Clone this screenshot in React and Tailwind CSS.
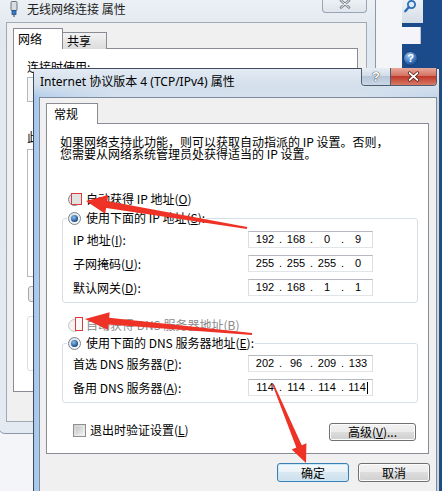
import React from 'react';

const cjk = "font-['Noto_Sans_CJK_SC',sans-serif]";

// tapered annotation arrow, tail -> tip
function arrow(tx, ty, px, py, head, hw, w0, w1) {
  const dx = px - tx;
  const dy = py - ty;
  const len = Math.hypot(dx, dy);
  const ux = dx / len;
  const uy = dy / len;
  const nx = -uy;
  const ny = ux;
  const bx = px - ux * head;
  const by = py - uy * head;
  const pts = [
    [tx + (nx * w0) / 2, ty + (ny * w0) / 2],
    [bx + (nx * w1) / 2, by + (ny * w1) / 2],
    [bx + (nx * hw) / 2, by + (ny * hw) / 2],
    [px, py],
    [bx - (nx * hw) / 2, by - (ny * hw) / 2],
    [bx - (nx * w1) / 2, by - (ny * w1) / 2],
    [tx - (nx * w0) / 2, ty - (ny * w0) / 2],
  ];
  return pts.map((p) => p.map((v) => v.toFixed(1)).join(',')).join(' ');
}

function K({ c }) {
  return (
    <>
      (<span className="underline underline-offset-1">{c}</span>)
    </>
  );
}

function Radio({ checked = false, disabled = false }) {
  return (
    <span
      className={`flex h-[13px] w-[13px] shrink-0 items-center justify-center rounded-full border ${
        disabled
          ? 'border-[#c9c9c9] bg-[#f3f3f3]'
          : 'border-[#7b838c] bg-[linear-gradient(135deg,#d9dde2,#ffffff)]'
      }`}
    >
      {checked && (
        <span className="h-[7px] w-[7px] rounded-full bg-[radial-gradient(circle_at_40%_35%,#8cc2ee,#1b4a88_70%)]" />
      )}
    </span>
  );
}

function Checkbox() {
  return (
    <span className="block h-[13px] w-[13px] shrink-0 border border-[#8e8f8f] bg-[linear-gradient(135deg,#d0d0d0,#f6f6f6)] p-[2px]">
      <span className="block h-full w-full bg-[linear-gradient(135deg,#c6c6c6,#ededed)]" />
    </span>
  );
}

function IpBox({ parts, cursor = false }) {
  return (
    <div className="flex h-[17px] w-[125px] items-center border border-[#b5b8bf] border-b-[#e0e5ea] border-l-[#dadde3] border-r-[#dadde3] bg-white pl-[2px] font-['Liberation_Sans',sans-serif] text-[11px] leading-none">
      <span className="w-[28px] text-center">{parts[0]}</span>
      <span className="flex w-[3px] justify-center">.</span>
      <span className="w-[28px] text-center">{parts[1]}</span>
      <span className="flex w-[3px] justify-center">.</span>
      <span className="w-[28px] text-center">{parts[2]}</span>
      <span className="flex w-[3px] justify-center">.</span>
      <span className="flex w-[28px] items-center justify-center">
        {parts[3]}
        {cursor && <span className="ml-px h-[12px] w-px bg-black" />}
      </span>
    </div>
  );
}

function Row({ label, parts, cursor }) {
  return (
    <div className="grid grid-cols-[175px_125px] items-center">
      <span className="text-[12px] leading-[14px]">{label}</span>
      <IpBox parts={parts} cursor={cursor} />
    </div>
  );
}

function Btn({ children, primary = false, className = '' }) {
  return (
    <div
      className={`flex items-center justify-center rounded-[3px] border text-[12px] leading-none ${
        primary
          ? 'border-[#3c7fb1] bg-[linear-gradient(#f4f9fc,#e9f2f8_50%,#d9e8f2_50%,#cde0ee)] shadow-[inset_0_0_0_1px_#c9e8f8]'
          : 'border-[#707070] bg-[linear-gradient(#f2f2f2,#ebebeb_50%,#dddddd_50%,#cfcfcf)] shadow-[inset_0_0_0_1px_#fcfcfc]'
      } ${className}`}
    >
      {children}
    </div>
  );
}

function RightStrip() {
  return (
    <div className="absolute left-[402px] top-0 flex h-full w-[40px] bg-[#1c4b8b]">
      <div className="flex w-[21px] flex-col">
        <div className="h-[23px] bg-[linear-gradient(#eef2f6,#d4dce6)] pl-px">
          <svg width="14" height="14" viewBox="0 0 14 14">
            <circle cx="8.5" cy="4.5" r="3.6" fill="#dbe9f7" stroke="#2c6cb6" strokeWidth="1.8" />
            <path d="M5.8 7.3 L2.2 11.2" stroke="#2c6cb6" strokeWidth="2.4" strokeLinecap="round" />
          </svg>
        </div>
        <div className="mt-[4px] h-[17px] w-[19px] border-r border-[#b9bfd6] bg-[#f4f4fa]" />
        <div className="mt-[7px] pl-px">
          <span className="flex h-[15px] w-[15px] items-center justify-center rounded-full border border-[#1b3f73] bg-[radial-gradient(circle_at_40%_30%,#9cc8f2,#2a62ad_65%,#173f7a)] font-['Liberation_Sans',sans-serif] text-[11px] font-bold leading-none text-white">
            ?
          </span>
        </div>
      </div>
    </div>
  );
}

function BackWindow() {
  return (
    <div className="absolute left-[-2px] top-[-6px] flex h-[440px] w-[378px] flex-col rounded-[7px] border border-[#8c98a7] bg-[linear-gradient(#eef2f6,#e1e8ef_8%,#e4eaf1)]">
      <div className="flex h-[27px] items-start">
        <svg className="ml-[11px] mt-[6px]" width="8" height="16" viewBox="0 0 8 16">
          <rect x="1" y="0.5" width="6" height="9" rx="1" fill="#d8dde2" stroke="#6d7680" />
          <rect x="2" y="9.5" width="4" height="4" fill="#3a79c4" stroke="#254f85" strokeWidth="0.8" />
          <path d="M4 13.5 V16" stroke="#555" strokeWidth="1.2" />
        </svg>
        <span className="ml-[9px] mt-[6px] text-[12px] leading-[16px] text-[#1e1e1e]">无线网络连接 属性</span>
        <div className="ml-auto mr-[8px] flex h-[18px] w-[45px] items-center justify-center rounded-b-[4px] border border-t-0 border-[#9aa5b3] bg-[linear-gradient(#f3f5f8,#dfe5ec)]">
          <svg width="12" height="10" viewBox="0 0 12 10">
            <path d="M2 1.5 L10 8.5 M10 1.5 L2 8.5" stroke="#7d8590" strokeWidth="2.6" strokeLinecap="round" />
            <path d="M2 1.5 L10 8.5 M10 1.5 L2 8.5" stroke="#f4f4f4" strokeWidth="1" strokeLinecap="round" />
          </svg>
        </div>
      </div>
      <div className="ml-[7px] flex h-[400px] w-[361px] flex-col border border-[#a0a9b4] bg-[#f0f0f0] pl-[6px] pt-[5px]">
        <div className="relative z-10 flex items-end">
          <div className="h-[21px] w-[50px] border border-b-0 border-[#898c95] bg-white pl-[4px] pt-[2px] text-[12px] leading-[16px]">
            网络
          </div>
          <div className="h-[17px] w-[44px] border border-b-0 border-l-0 border-[#898c95] bg-[linear-gradient(#f2f2f2,#dcdcdc)] pl-[4px] text-[12px] leading-[16px]">
            共享
          </div>
        </div>
        <div className="-mt-px flex h-[344px] w-[345px] flex-col border border-[#898c95] bg-white pl-[13px] pt-[11px] text-[12px] leading-[14px]">
          <span>连接时使用:</span>
          <div className="mt-[3px] h-[25px] w-[318px] border border-[#b5b8bf] bg-[#f7f7f7]" />
          <span className="mt-[28px]">此连接使用下列项目(O):</span>
          <div className="mt-[5px] h-[128px] w-[318px] border border-[#b5b8bf] bg-white" />
          <div className="ml-px mt-[9px] h-[16px] w-[75px] rounded-[3px] border border-[#a8a8a8] bg-[#ececec]" />
          <div className="mt-[14px] h-[55px] w-[318px] rounded-[3px] border border-[#d5dfe5]" />
        </div>
      </div>
    </div>
  );
}

function Dialog() {
  return (
    <div className="absolute left-[33px] top-[68px] flex h-[430px] w-[407px] flex-col rounded-t-[6px] border border-[#3e4b5c] bg-[linear-gradient(90deg,#a4c6ec,#b7d0ec_2%,#d4e1ee_20%,#d6e2ee_80%,#c4d6ea)]">
      <div className="flex h-[28px] items-start bg-[linear-gradient(#e3ebf4,#d3dfeb_60%,transparent)]">
        <span className="ml-[6px] mt-[5px] font-['Noto_Sans','Noto_Sans_CJK_SC',sans-serif] text-[12px] leading-[16px]">
          Internet 协议版本 4 (TCP/IPv4) 属性
        </span>
        <div className="ml-auto mr-[2px] flex h-[18px] -translate-y-px overflow-hidden rounded-b-[4px] border border-t-0 border-[#4f5d6f]">
          <div className="flex w-[29px] items-center justify-center border-r border-[#4f5d6f] bg-[linear-gradient(#e8eef5,#cfdbe8_50%,#b6c7da_50%,#c9d7e6)]">
            <span className="font-['Liberation_Sans',sans-serif] text-[13px] font-bold leading-none text-white [text-shadow:0_0_1px_#333,0_0_1px_#333]">
              ?
            </span>
          </div>
          <div className="flex w-[45px] items-center justify-center bg-[linear-gradient(#e9a99b,#d47463_45%,#c0392b_50%,#d77a62)]">
            <svg width="13" height="11" viewBox="0 0 13 11">
              <path d="M2.5 2 L10.5 9 M10.5 2 L2.5 9" stroke="#4a1a14" strokeWidth="3.2" strokeLinecap="round" />
              <path d="M2.5 2 L10.5 9 M10.5 2 L2.5 9" stroke="#ffffff" strokeWidth="1.7" strokeLinecap="round" />
            </svg>
          </div>
        </div>
      </div>
      <div className="ml-[5px] mr-[2px] flex flex-1 flex-col border border-[#7c8a9c] bg-[#f0f0f0] pl-[6px] pr-[6px] pt-[5px]">
        <div className="relative z-10 h-[21px] w-[52px] border border-b-0 border-[#898c95] bg-white pl-[7px] pt-[2px] text-[12px] leading-[16px]">
          常规
        </div>
        <div className="-mt-px flex h-[331px] w-[383px] flex-col border border-[#898c95] bg-white pl-[13px] pt-[12px] text-[12px]">
          <p className="leading-[12px]">
            如果网络支持此功能，则可以获取自动指派的 IP 设置。否则，
            <br />
            您需要从网络系统管理员处获得适当的 IP 设置。
          </p>
          <div className="ml-[8px] mt-[32px] flex items-center gap-[5px] leading-[14px]">
            <Radio />
            <span>
              自动获得 IP 地址<K c="O" />
            </span>
          </div>
          <fieldset className="ml-[2px] mt-[5px] w-[356px] rounded-[3px] border border-[#d5dfe5]">
            <legend className="ml-[4px] px-[1px]">
              <span className="flex items-center gap-[5px] leading-[14px]">
                <Radio checked />
                <span>
                  使用下面的 IP 地址<K c="S" />:
                </span>
              </span>
            </legend>
            <div className="flex flex-col gap-[7px] pb-[6px] pl-[10px] pt-[6px]">
              <Row label={<>IP 地址<K c="I" />:</>} parts={['192', '168', '0', '9']} />
              <Row label={<>子网掩码<K c="U" />:</>} parts={['255', '255', '255', '0']} />
              <Row label={<>默认网关<K c="D" />:</>} parts={['192', '168', '1', '1']} />
            </div>
          </fieldset>
          <div className="ml-[8px] mt-[15px] flex items-center gap-[5px] leading-[14px] text-[#8a8a8a]">
            <Radio disabled />
            <span>
              自动获得 DNS 服务器地址<K c="B" />
            </span>
          </div>
          <fieldset className="ml-[2px] mt-[4px] w-[356px] rounded-[3px] border border-[#d5dfe5]">
            <legend className="ml-[4px] px-[1px]">
              <span className="flex items-center gap-[5px] leading-[14px]">
                <Radio checked />
                <span>
                  使用下面的 DNS 服务器地址<K c="E" />:
                </span>
              </span>
            </legend>
            <div className="flex flex-col gap-[7px] pb-[6px] pl-[10px] pt-[5px]">
              <Row label={<>首选 DNS 服务器<K c="P" />:</>} parts={['202', '96', '209', '133']} />
              <Row label={<>备用 DNS 服务器<K c="A" />:</>} parts={['114', '114', '114', '114']} cursor />
            </div>
          </fieldset>
          <div className="ml-[2px] mt-[20px] flex w-[356px] items-start justify-between">
            <div className="ml-[11px] flex items-center gap-[4px] leading-[14px]">
              <Checkbox />
              <span>
                退出时验证设置<K c="L" />
              </span>
            </div>
            <Btn className="mr-[2px] h-[18px] w-[87px]">
              高级<K c="V" />...
            </Btn>
          </div>
        </div>
        <div className="mt-[9px] flex justify-end gap-[9px]">
          <Btn primary className="h-[19px] w-[72px]">
            确定
          </Btn>
          <Btn className="h-[19px] w-[72px]">取消</Btn>
        </div>
      </div>
    </div>
  );
}

function Marks() {
  return (
    <svg className="pointer-events-none absolute left-0 top-0" width="442" height="491">
      <rect x="71.5" y="193.5" width="10" height="11" fill="#e2e2e2" stroke="#e0393b" />
      <rect x="75.5" y="317.5" width="7" height="13" fill="#f8f8f8" stroke="#e0393b" />
      <polygon points={arrow(247, 228, 86, 201, 21, 19, 2, 7)} fill="#ee3226" />
      <polygon points={arrow(252, 334, 85, 319, 24, 18, 2, 7)} fill="#ee3226" />
      <polygon points={arrow(273, 384, 306, 463, 18, 16, 1.5, 6)} fill="#ee3226" />
    </svg>
  );
}

export default function App() {
  return (
    <div className={`relative h-[491px] w-[442px] overflow-hidden bg-[#f3f5f8] text-black ${cjk}`}>
      <RightStrip />
      <BackWindow />
      <Dialog />
      <Marks />
    </div>
  );
}
